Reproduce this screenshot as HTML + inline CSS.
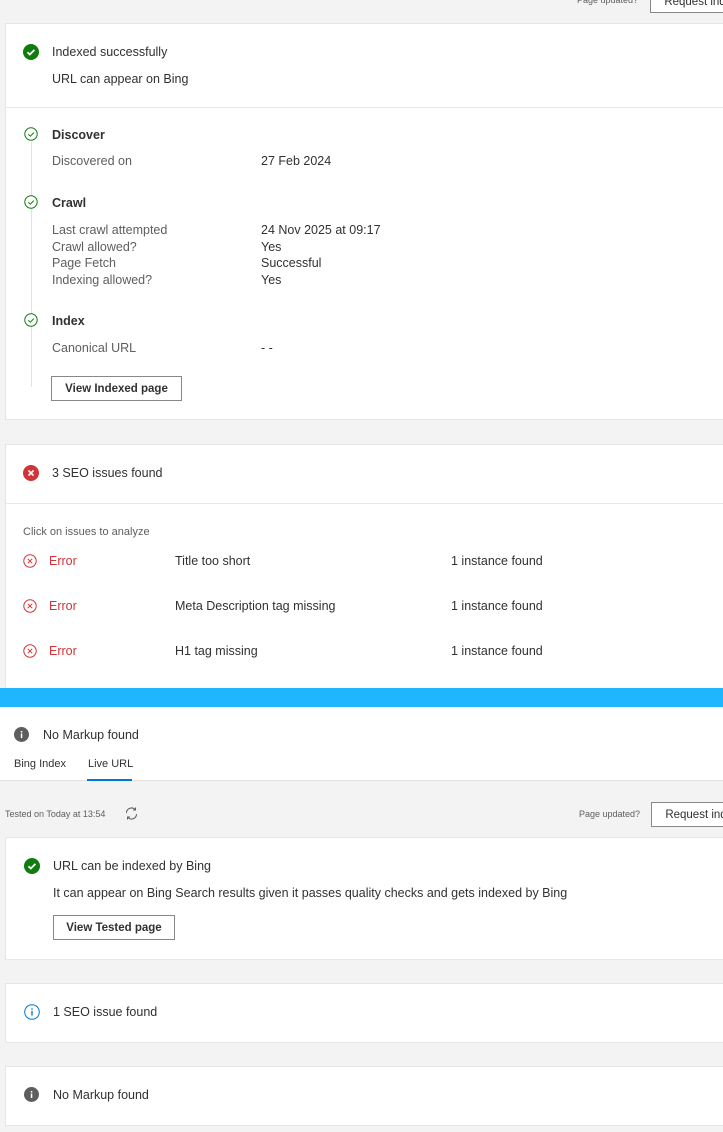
<!DOCTYPE html>
<html><head><style>
*{margin:0;padding:0;box-sizing:border-box}
body{width:723px;height:1132px;background:#f3f3f3;font-family:"Liberation Sans",sans-serif;color:#323130;position:relative;overflow:hidden;font-size:12.5px}
.a{position:absolute;white-space:nowrap}
.card{position:absolute;left:5px;width:730px;background:#fff;border:1px solid #e6e6e6}
.btn{position:absolute;background:#fff;border:1px solid #8a8886;font-size:11.5px;font-weight:bold;color:#323130;display:flex;align-items:center;justify-content:center}
.hr{position:absolute;left:5px;width:730px;height:1px;background:#e6e6e6}
.g{color:#605e5c}
.r{color:#d13438}
</style></head><body>
<div class="a" style="left:577px;top:-5px;font-size:9px;color:#605e5c">Page updated?</div>
<div class="btn" style="left:650px;top:-10px;width:90px;height:23px;font-weight:normal">Request ind</div>

<div class="card" style="top:23px;height:397px"></div>
<div class="hr" style="top:107px"></div>
<svg class="a" style="left:23px;top:44px" width="16" height="16"><circle cx="8" cy="8" r="8" fill="#107c10"/><path d="M4.5 8.3l2.3 2.2 4.6-4.6" stroke="#fff" stroke-width="1.8" fill="none"/></svg>
<div class="a" style="left:52px;top:45px">Indexed successfully</div>
<div class="a" style="left:52px;top:72px">URL can appear on Bing</div>

<div class="a" style="left:31px;top:142px;width:1px;height:245px;background:#e1e1e1"></div>
<svg class="a" style="left:24px;top:127px;background:#fff" width="14" height="14"><circle cx="7" cy="7" r="6.2" stroke="#107c10" fill="#fff"/><path d="M4.3 7.2l2 2 3.5-3.6" stroke="#107c10" fill="none"/></svg>
<svg class="a" style="left:24px;top:195px" width="14" height="14"><circle cx="7" cy="7" r="6.2" stroke="#107c10" fill="#fff"/><path d="M4.3 7.2l2 2 3.5-3.6" stroke="#107c10" fill="none"/></svg>
<svg class="a" style="left:24px;top:313px" width="14" height="14"><circle cx="7" cy="7" r="6.2" stroke="#107c10" fill="#fff"/><path d="M4.3 7.2l2 2 3.5-3.6" stroke="#107c10" fill="none"/></svg>
<div class="a" style="left:52px;top:128px;font-weight:bold">Discover</div>
<div class="a g" style="left:52px;top:154px">Discovered on</div>
<div class="a" style="left:261px;top:154px">27 Feb 2024</div>
<div class="a" style="left:52px;top:196px;font-weight:bold">Crawl</div>
<div class="a g" style="left:52px;top:222px;line-height:16.7px">Last crawl attempted<br>Crawl allowed?<br>Page Fetch<br>Indexing allowed?</div>
<div class="a" style="left:261px;top:222px;line-height:16.7px">24 Nov 2025 at 09:17<br>Yes<br>Successful<br>Yes</div>
<div class="a" style="left:52px;top:314px;font-weight:bold">Index</div>
<div class="a g" style="left:52px;top:341px">Canonical URL</div>
<div class="a" style="left:261px;top:341px">- -</div>
<div class="btn" style="left:51px;top:376px;width:131px;height:25px">View Indexed page</div>

<div class="card" style="top:444px;height:260px"></div>
<div class="hr" style="top:503px"></div>
<svg class="a" style="left:23px;top:465px" width="16" height="16"><circle cx="8" cy="8" r="8" fill="#d13438"/><path d="M5.5 5.5l5 5M10.5 5.5l-5 5" stroke="#fff" stroke-width="1.6"/></svg>
<div class="a" style="left:52px;top:466px">3 SEO issues found</div>
<div class="a g" style="left:23px;top:526px;font-size:11px">Click on issues to analyze</div>
<svg class="a" style="left:23px;top:554px" width="14" height="14"><circle cx="7" cy="7" r="6.2" stroke="#d13438" fill="none"/><path d="M4.8 4.8l4.4 4.4M9.2 4.8l-4.4 4.4" stroke="#d13438"/></svg>
<svg class="a" style="left:23px;top:599px" width="14" height="14"><circle cx="7" cy="7" r="6.2" stroke="#d13438" fill="none"/><path d="M4.8 4.8l4.4 4.4M9.2 4.8l-4.4 4.4" stroke="#d13438"/></svg>
<svg class="a" style="left:23px;top:644px" width="14" height="14"><circle cx="7" cy="7" r="6.2" stroke="#d13438" fill="none"/><path d="M4.8 4.8l4.4 4.4M9.2 4.8l-4.4 4.4" stroke="#d13438"/></svg>
<div class="a r" style="left:49px;top:554px">Error</div>
<div class="a r" style="left:49px;top:599px">Error</div>
<div class="a r" style="left:49px;top:644px">Error</div>
<div class="a" style="left:175px;top:554px">Title too short</div>
<div class="a" style="left:175px;top:599px">Meta Description tag missing</div>
<div class="a" style="left:175px;top:644px">H1 tag missing</div>
<div class="a" style="left:451px;top:554px">1 instance found</div>
<div class="a" style="left:451px;top:599px">1 instance found</div>
<div class="a" style="left:451px;top:644px">1 instance found</div>

<div class="a" style="left:0;top:688px;width:723px;height:19px;background:#20b6ff"></div>
<div class="a" style="left:0;top:707px;width:723px;height:74px;background:#fff;border-bottom:1px solid #e1e1e1"></div>
<svg class="a" style="left:14px;top:727px" width="15" height="15"><circle cx="7.5" cy="7.5" r="7.5" fill="#605e5c"/><rect x="6.8" y="6.5" width="1.5" height="4.5" fill="#fff"/><rect x="6.8" y="4" width="1.5" height="1.5" fill="#fff"/></svg>
<div class="a" style="left:43px;top:728px">No Markup found</div>
<div class="a" style="left:14px;top:758px;font-size:11px">Bing Index</div>
<div class="a" style="left:88px;top:758px;font-size:11px">Live URL</div>
<div class="a" style="left:87px;top:779px;width:45px;height:2px;background:#0078d4"></div>

<div class="a g" style="left:5px;top:809px;font-size:9px">Tested on Today at 13:54</div>
<svg class="a" style="left:124px;top:806px" width="15" height="15"><path d="M2.5 7a5 5 0 0 1 9-3M12.5 8a5 5 0 0 1-9 3" stroke="#605e5c" fill="none"/><path d="M11.5 1.5v2.5h-2.5M3.5 13.5v-2.5h2.5" stroke="#605e5c" fill="none"/></svg>
<div class="a g" style="left:579px;top:809px;font-size:9px">Page updated?</div>
<div class="btn" style="left:651px;top:802px;width:90px;height:25px;font-weight:normal">Request ind</div>

<div class="card" style="top:837px;height:123px"></div>
<svg class="a" style="left:24px;top:858px" width="16" height="16"><circle cx="8" cy="8" r="8" fill="#107c10"/><path d="M4.5 8.3l2.3 2.2 4.6-4.6" stroke="#fff" stroke-width="1.8" fill="none"/></svg>
<div class="a" style="left:53px;top:859px">URL can be indexed by Bing</div>
<div class="a" style="left:53px;top:886px">It can appear on Bing Search results given it passes quality checks and gets indexed by Bing</div>
<div class="btn" style="left:53px;top:915px;width:122px;height:25px">View Tested page</div>

<div class="card" style="top:983px;height:60px"></div>
<svg class="a" style="left:24px;top:1004px" width="16" height="16"><circle cx="8" cy="8" r="7.3" stroke="#0078d4" fill="none"/><rect x="7.3" y="7" width="1.4" height="4.5" fill="#0078d4"/><rect x="7.3" y="4.3" width="1.4" height="1.4" fill="#0078d4"/></svg>
<div class="a" style="left:53px;top:1005px">1 SEO issue found</div>

<div class="card" style="top:1066px;height:60px"></div>
<svg class="a" style="left:24px;top:1087px" width="15" height="15"><circle cx="7.5" cy="7.5" r="7.5" fill="#605e5c"/><rect x="6.8" y="6.5" width="1.5" height="4.5" fill="#fff"/><rect x="6.8" y="4" width="1.5" height="1.5" fill="#fff"/></svg>
<div class="a" style="left:53px;top:1088px">No Markup found</div>
</body></html>
